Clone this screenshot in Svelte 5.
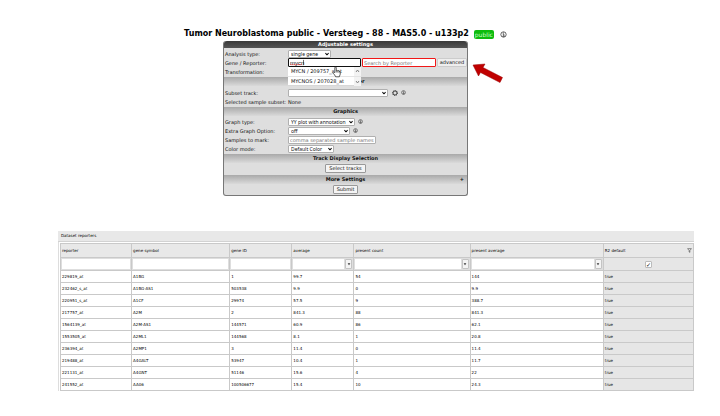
<script>
  const suggestions = ['MYCN / 209757_s_at', 'MYCNOS / 207028_at'];
  let gene = $state('mycn');

  const columns = [
    { name: 'reporter', width: 71 },
    { name: 'gene symbol', width: 98 },
    { name: 'gene ID', width: 62 },
    { name: 'average', width: 62, menu: true },
    { name: 'present count', width: 116, menu: true },
    { name: 'present average', width: 133, menu: true },
    { name: 'R2 default', width: 90, check: true }
  ];
  const total = columns.reduce((sum, c) => sum + c.width, 0);

  const rows = [
    ['229819_at', 'A1BG', '1', '99.7', '54', '144', 'true'],
    ['232462_s_at', 'A1BG-AS1', '503538', '9.9', '0', '9.9', 'true'],
    ['220951_s_at', 'A1CF', '29974', '57.5', '9', '388.7', 'true'],
    ['217757_at', 'A2M', '2', '841.3', '88', '841.3', 'true'],
    ['1564139_at', 'A2M-AS1', '144571', '60.9', '86', '62.1', 'true'],
    ['1553505_at', 'A2ML1', '144568', '8.1', '1', '20.8', 'true'],
    ['236394_at', 'A2MP1', '3', '11.4', '0', '11.4', 'true'],
    ['219488_at', 'A4GALT', '53947', '10.4', '1', '11.7', 'true'],
    ['221131_at', 'A4GNT', '51146', '15.6', '4', '22', 'true'],
    ['241552_at', 'AA06', '100506677', '15.4', '10', '24.3', 'true']
  ];
</script>

{#snippet info()}
  <svg class="info" viewBox="0 0 12 12" aria-hidden="true">
    <circle cx="6" cy="6" r="4.6" fill="none" stroke="currentColor" stroke-width="1.3" />
    <path d="M4.5 5H6.5V9M4.3 9H8M6 2.5V3.8" fill="none" stroke="currentColor" stroke-width="1.4" />
  </svg>
{/snippet}

{#snippet picker(id, value, size)}
  <span class="picker {size}">
    <select {id}><option>{value}</option></select>
    <svg viewBox="0 0 10 10" aria-hidden="true"><path d="M1 3L5 7L9 3" fill="none" stroke="#111" stroke-width="2.8" /></svg>
  </span>
{/snippet}

<main>
  <section class="top">
    <h1>
      <span>Tumor Neuroblastoma public - Versteeg - 88 - MAS5.0 - u133p2</span>
      <span class="badge">public</span>
      {@render info()}
    </h1>

    <form class="panel" onsubmit={(e) => e.preventDefault()}>
      <h2 class="head">Adjustable settings</h2>
      <div class="group">
        <div class="row">
          <label for="analysis">Analysis type:</label>
          {@render picker('analysis', 'single gene', 'w43')}
        </div>
        <div class="row">
          <label for="gene">Gene / Reporter:</label>
          <div class="gene">
            <div class="combo">
              <input id="gene" bind:value={gene} autocomplete="off" spellcheck="false" />
              <svg class="caret" viewBox="0 0 16 8" aria-hidden="true">
                <path d="M0 7L1 6L2 7L3 6L4 7L5 6L6 7L7 6L8 7L9 6L10 7L11 6L12 7L13 6L14 7" fill="none" stroke="#e33" stroke-width=".7" />
                <path d="M15.5 1V7" stroke="#222" stroke-width=".8" />
              </svg>
              <ul>
                {#each suggestions as s, i}
                  <li>
                    <span>{s}</span>
                    <svg viewBox="0 0 7 9" aria-hidden="true"><path d={i ? 'M2 4L3.5 6L5 4' : 'M2 5L3.5 3L5 5'} fill="none" stroke="#777" stroke-width=".9" /></svg>
                  </li>
                {/each}
              </ul>
              <svg class="hand" viewBox="0 0 16 20" aria-hidden="true">
                <path d="M5 11V2.5Q5 1 6.3 1T7.6 2.5V8L9 7.2L10.4 8.2L12 7.8L13 9L14.6 9.4V14L13 18.5H6.5L4.5 15L1.5 11.8Q1 10.4 2.4 10Z" fill="#fff" stroke="#222" stroke-width="1.3" stroke-linejoin="round" />
                <path d="M7.6 8V11M10.2 8.5V11M12.6 9V11.5" stroke="#222" />
              </svg>
            </div>
            <input class="reporter" aria-label="Reporter" placeholder="Search by Reporter" />
            <button type="button" class="adv">advanced</button>
          </div>
        </div>
        <div class="row"><span>Transformation:</span></div>
      </div>

      <h3>Sample Filter</h3>
      <div class="group late">
        <div class="row">
          <label for="subset">Subset track:</label>
          {@render picker('subset', '', 'w100')}
          <svg class="gear" viewBox="0 0 12 12" aria-hidden="true">
            <circle cx="6" cy="6" r="4" fill="none" stroke="#222" stroke-width="1.8" />
            <circle cx="6" cy="6" r="5.2" fill="none" stroke="#222" stroke-width="1.4" stroke-dasharray="2 2.08" />
            <circle cx="6" cy="6" r="2.6" fill="#ddd" />
          </svg>
          {@render info()}
        </div>
        <div class="row"><span>Selected sample subset:</span><span>None</span></div>
      </div>

      <h3>Graphics</h3>
      <div class="group">
        <div class="row">
          <label for="graph">Graph type:</label>
          {@render picker('graph', 'YY plot with annotation', 'w67')}
          {@render info()}
        </div>
        <div class="row">
          <label for="extra">Extra Graph Option:</label>
          {@render picker('extra', 'off', 'w62')}
          {@render info()}
        </div>
        <div class="row">
          <label for="mark">Samples to mark:</label>
          <input id="mark" class="mark" placeholder="comma separated sample names" />
        </div>
        <div class="row">
          <label for="color">Color mode:</label>
          {@render picker('color', 'Default Color', 'w46')}
        </div>
      </div>

      <h3>Track Display Selection</h3>
      <div class="action"><button type="button">Select tracks</button></div>
      <h3>More Settings<span class="plus">+</span></h3>
      <div class="action last"><button type="submit">Submit</button></div>

      <svg class="arrow" viewBox="0 0 32 22" aria-hidden="true">
        <path d="M1 2L13 1L11 4.5L30.5 14.5L28 19.5L8.5 9.5L6.5 13Z" fill="#c00000" stroke="#990000" stroke-width=".5" />
      </svg>
    </form>
  </section>

  <section class="data">
    <h2 class="caption">Dataset reporters</h2>
    <div class="frame">
      <table>
        <colgroup>
          {#each columns as c}<col style="width: {(c.width / total) * 100}%" />{/each}
        </colgroup>
        <thead>
          <tr>
            {#each columns as c}
              <th scope="col">
                <div class="title">
                  <span>{c.name}</span>
                  {#if c.check}
                    <svg viewBox="0 0 8 8" aria-hidden="true"><path d="M1 1H7L4.6 4V7L3.4 6.4V4Z" fill="none" stroke="#444" stroke-width=".9" /></svg>
                  {/if}
                </div>
              </th>
            {/each}
          </tr>
          <tr class="filters">
            {#each columns as c}
              <td>
                <div class="filter">
                  {#if c.check}
                    <input type="checkbox" checked aria-label="Filter {c.name}" />
                  {:else}
                    <input type="text" aria-label="Filter {c.name}" />
                    {#if c.menu}
                      <button type="button" aria-label="Filter options for {c.name}">
                        <svg viewBox="0 0 6 6" aria-hidden="true"><path d="M1 2H5L3 5Z" fill="#333" /></svg>
                      </button>
                    {/if}
                  {/if}
                </div>
              </td>
            {/each}
          </tr>
        </thead>
        <tbody>
          {#each rows as r}
            <tr>{#each r as cell}<td>{cell}</td>{/each}</tr>
          {/each}
        </tbody>
      </table>
    </div>
  </section>
</main>

<style>
  :global(body) {
    margin: 0;
    background: #fff;
  }
  main {
    padding: 28px 26px 26px 58px;
    font-family: 'DejaVu Sans', Verdana, sans-serif;
    font-size: 5px;
    color: #111;
  }
  main * {
    box-sizing: border-box;
  }
  h1, h2, h3, ul {
    margin: 0;
    padding: 0;
  }
  svg {
    display: block;
    flex: none;
  }
  .top {
    display: flex;
    flex-direction: column;
    align-items: center;
    padding-right: 61px;
  }
  h1 {
    display: flex;
    align-items: center;
    gap: 5px;
    height: 12px;
    font-size: 8px;
    line-height: 12px;
    color: #000;
    white-space: nowrap;
  }
  .badge {
    padding: 0 1px;
    border-radius: 2px;
    background: #0dbb0d;
    color: #c9ffc9;
    font-size: 6px;
    font-weight: 400;
    line-height: 9px;
  }
  .info {
    width: 5px;
    height: 5px;
    margin-left: 3px;
    color: #333;
  }
  h1 .info {
    width: 7px;
    height: 7px;
    margin-left: 1px;
  }
  .panel {
    position: relative;
    width: 245px;
    margin-top: 1px;
    border: 1px solid #777;
    border-top: 0;
    border-radius: 3px;
    background: #dedede;
  }
  .head {
    border-radius: 3px 3px 0 0;
    background: linear-gradient(#3a3a3a, #555);
    color: #fff;
    font-size: 5px;
    line-height: 7px;
    text-align: center;
  }
  h3 {
    position: relative;
    height: 9px;
    background: linear-gradient(#a9a9a9, #dadada);
    color: #111;
    font-size: 5px;
    line-height: 9px;
    text-align: center;
  }
  .plus {
    position: absolute;
    right: 3px;
  }
  .group {
    padding: 1px 0;
  }
  .late {
    padding-top: 2px;
  }
  .row {
    display: flex;
    align-items: center;
    height: 9px;
    white-space: nowrap;
  }
  .row > :first-child {
    flex: none;
    width: 64px;
    padding-left: 1px;
  }
  input, select, button {
    margin: 0;
    font-family: 'DejaVu Sans', Verdana, sans-serif;
    font-size: 5px;
    color: #111;
  }
  .picker {
    position: relative;
    display: block;
    flex: none;
    height: 8px;
  }
  .picker select {
    display: block;
    width: 100%;
    height: 8px;
    padding: 0 2px;
    border: 1px solid #b0b0b0;
    border-radius: 1px;
    background: #fff;
    appearance: none;
    font-family: 'Noto Sans', sans-serif;
    line-height: 6px;
  }
  .picker svg {
    position: absolute;
    right: 2px;
    top: 2px;
    width: 4px;
    height: 4px;
    pointer-events: none;
  }
  .w43 { width: 43px; }
  .w46 { width: 46px; }
  .w62 { width: 62px; }
  .w67 { width: 67px; }
  .w100 { width: 100px; }
  .gear {
    width: 6px;
    height: 6px;
    margin-left: 4px;
  }
  .gene {
    display: flex;
    flex: 1;
    align-items: center;
    gap: 1px;
  }
  .combo {
    position: relative;
    width: 73px;
  }
  .combo input, .reporter, .mark {
    display: block;
    width: 100%;
    height: 9px;
    padding: 0 1px;
    border: 1px solid #111;
    border-radius: 1px;
    outline: 0;
    background: #fff;
  }
  .combo input {
    font-family: 'Liberation Sans', Arial, sans-serif;
    font-size: 6px;
  }
  .caret {
    position: absolute;
    left: 2px;
    top: 1px;
    width: 14px;
    height: 7px;
    pointer-events: none;
  }
  ul {
    position: absolute;
    z-index: 2;
    top: 100%;
    left: 0;
    width: 100%;
    background: #fff;
    list-style: none;
  }
  li {
    display: flex;
    justify-content: space-between;
    height: 9px;
    padding-left: 3px;
    line-height: 9px;
  }
  li + li {
    border-top: 1px solid #e4e4e4;
    line-height: 8px;
  }
  li svg {
    width: 7px;
    height: 9px;
    background: #f3f3f3;
  }
  .hand {
    position: absolute;
    z-index: 3;
    left: 44px;
    top: 8px;
    width: 9px;
    height: 12px;
  }
  .reporter {
    width: 74px;
    border-color: #f01818;
  }
  .mark {
    flex: none;
    width: 88px;
    height: 8px;
    border-color: #b0b0b0;
  }
  ::placeholder {
    color: #757575;
    opacity: 1;
  }
  button {
    height: 9px;
    padding: 0 3px;
    border: 1px solid #999;
    border-radius: 1px;
    background: #f4f4f4;
    line-height: 7px;
    white-space: nowrap;
  }
  .adv {
    flex: 1;
    padding: 0;
    border-color: #ccc;
    background: #eee;
  }
  .action {
    display: flex;
    justify-content: center;
    padding: 1px 0 2px;
  }
  .last {
    padding-bottom: 1px;
  }
  .arrow {
    position: absolute;
    left: 100%;
    top: 22px;
    width: 32px;
    height: 22px;
    margin-left: 5px;
  }
  .data {
    margin-top: 35px;
    color: #000;
    font-size: 4px;
  }
  .caption {
    height: 11px;
    padding-left: 3px;
    border-bottom: 1px solid #d2d2d2;
    background: #e8e8e8;
    font-size: 4px;
    font-weight: 400;
    line-height: 9px;
  }
  .frame {
    padding: 1px 0 0 1px;
    border-left: 1px solid #ddd;
  }
  table {
    width: 100%;
    border-collapse: collapse;
    table-layout: fixed;
  }
  th, td {
    height: 12px;
    padding: 0 1px;
    border: 1px solid #c9c9c9;
    line-height: 5px;
    text-align: left;
    white-space: nowrap;
  }
  th {
    height: 14px;
    background: #e8e8e8;
    font-weight: 400;
  }
  .filters td {
    height: 13px;
    padding: 0 1px;
    background: #dedede;
  }
  td:last-child, .filters td:last-child {
    background: #e6e6e6;
  }
  .title {
    display: flex;
    align-items: center;
    justify-content: space-between;
  }
  .title svg {
    width: 5px;
    height: 5px;
  }
  .filter {
    display: flex;
    justify-content: center;
    gap: 1px;
  }
  .filter input[type='text'] {
    flex: 1;
    min-width: 0;
    height: 10px;
    padding: 0 1px;
    border: 0;
    background: #fff;
  }
  .filter button {
    display: flex;
    align-items: center;
    justify-content: center;
    width: 7px;
    height: 10px;
    padding: 0;
    border-color: #c4c4c4;
  }
  .filter button svg {
    width: 4px;
    height: 4px;
  }
  input[type='checkbox'] {
    display: grid;
    place-content: center;
    width: 7px;
    height: 7px;
    border: 1px solid #bbb;
    border-radius: 1px;
    background: #fff;
    appearance: none;
  }
  input[type='checkbox']:checked::before {
    content: '✓';
    font-size: 6px;
    line-height: 5px;
  }
</style>
